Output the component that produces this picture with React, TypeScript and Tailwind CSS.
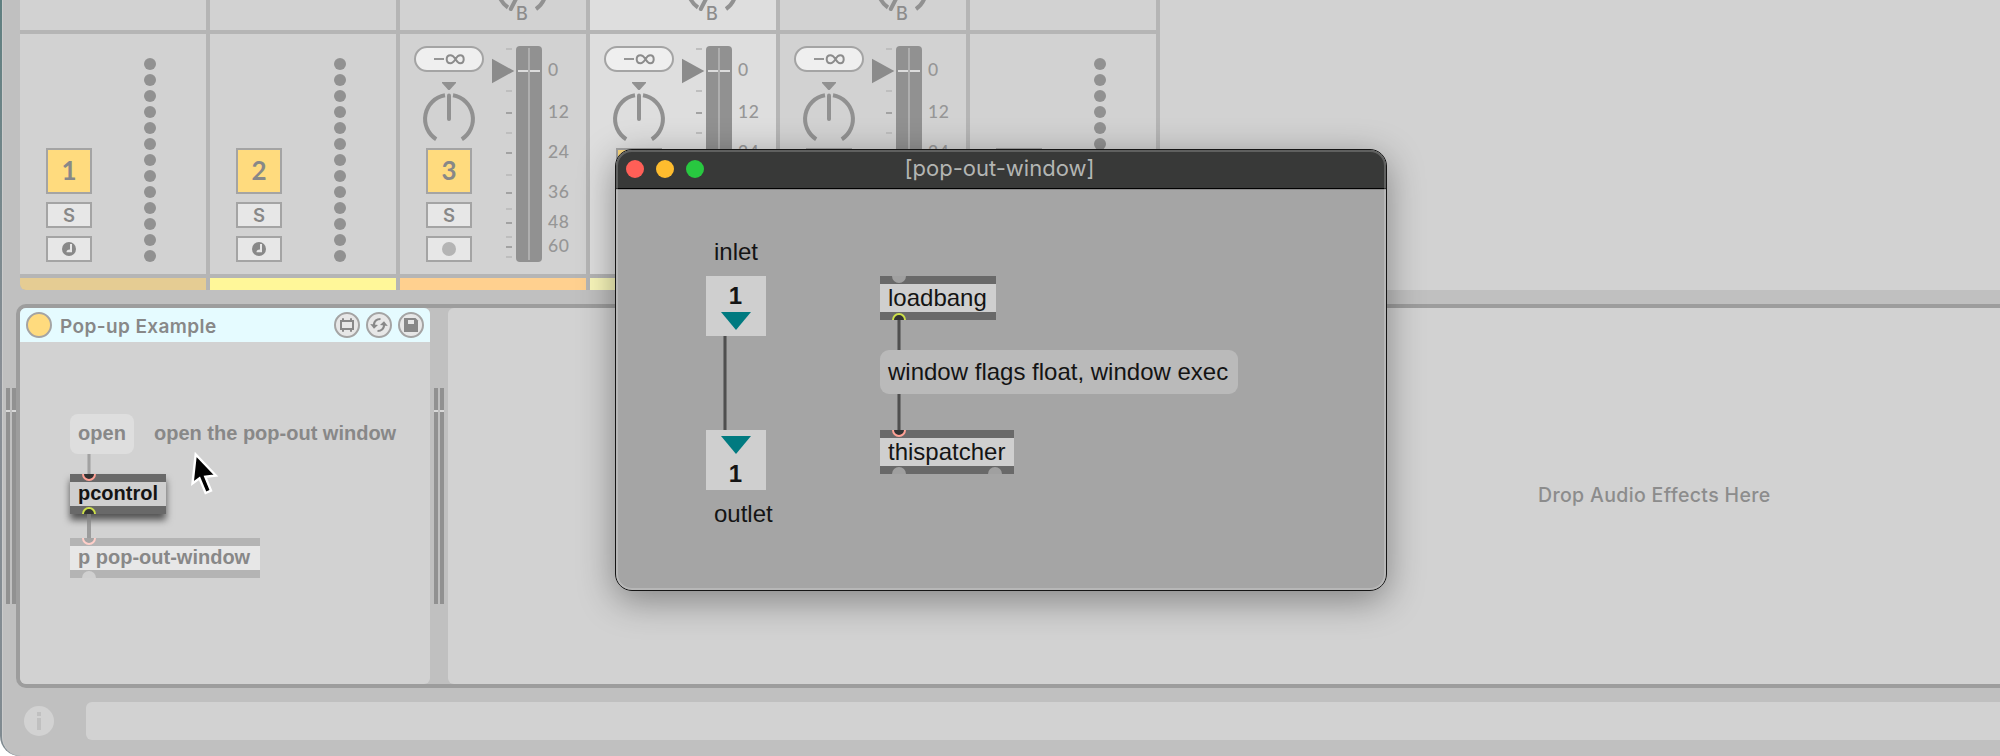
import React from "react";

const LABELS = [
  ["0", "mt-0"],
  ["12", "mt-[18px]"],
  ["24", "mt-4"],
  ["36", "mt-4"],
  ["48", "mt-1.5"],
  ["60", "mt-0"],
];

const TICKS = [15, 57, 79, 99, 119, 141, 159, 175, 189, 203, 213, 223];
const MAJOR = [79, 119, 159, 189, 213];

function PanKnob() {
  return (
    <svg width="70" height="76" viewBox="0 0 70 76" className="block shrink-0" fill="none">
      <path d="M28 10h14v1l-6.3 7h-1.4L28 11z" fill="#919191" />
      <path d="M31 23.3A24 24 0 0 0 22.2 67.2" stroke="#919191" strokeWidth="4" />
      <path d="M39 23.3A24 24 0 0 1 47.8 67.2" stroke="#919191" strokeWidth="4" />
      <path d="M35 23.500v23.500" stroke="#919191" strokeWidth="4" strokeLinecap="round" />
    </svg>
  );
}

function Fader() {
  return (
    <svg width="50" height="240" viewBox="0 0 50 240" className="ml-2 block shrink-0">
      {TICKS.map((y) => (
        <rect key={y} x="14" y={y - 1} width="6" height="2" fill={MAJOR.includes(y) ? "#a2a2a2" : "#bebebe"} />
      ))}
      <path d="M0 24.7L22.3 37L0 49.3z" fill="#8b8b8b" />
      <rect x="24" y="12" width="26" height="216" rx="4" fill="#919191" />
      <rect x="26" y="36" width="22" height="2" fill="#dcdcdc" />
      <rect x="36" y="14" width="2" height="212" fill="#afafaf" />
    </svg>
  );
}

function Dots() {
  return (
    <svg width="12" height="240" viewBox="0 0 12 240" className="ml-[40px] block">
      {Array.from({ length: 13 }, (_, i) => (
        <circle key={i} cx="6" cy={30 + i * 16} r="6" fill="#919191" />
      ))}
    </svg>
  );
}

function SendKnob() {
  return (
    <svg width="60" height="30" viewBox="0 0 60 30" className="ml-[92px] block" fill="none" stroke="#919191" strokeWidth="4">
      <path d="M7.5 -3A24 24 0 0 0 16 7.5M53 -3A24 24 0 0 1 44 9" />
      <path d="M25.5 -4L18.8 9" strokeLinecap="round" />
    </svg>
  );
}

type StripProps = { n: string; kind: "midi" | "audio" | "plain"; bg: string; color: string };

function Strip({ n, kind, bg, color }: StripProps) {
  const audio = kind === "audio";
  return (
    <div className="flex w-[186px] shrink-0 flex-col gap-1">
      <div className={`relative h-[30px] overflow-hidden ${bg}`}>
        {audio && <SendKnob />}
        {audio && (
          <span className="absolute left-[116px] top-[3px] font-[Inter] text-[18px] font-medium leading-[22px] text-[#8c8c8c]">B</span>
        )}
      </div>
      <div className={`flex h-[240px] ${bg}`}>
        <div className="ml-[14px] flex w-[70px] flex-col items-center pb-3">
          {audio ? (
            <>
              <div className="mt-3 flex h-[26px] w-[70px] shrink-0 items-center justify-center rounded-full border-2 border-[#a4a4a4] bg-[#efefef]">
                <svg width="32" height="14" viewBox="0 0 32 14" fill="none" stroke="#8c8c8c" strokeWidth="2">
                  <path d="M1 7h10" strokeWidth="1.8" />
                  <path d="M22.500 7C20.500 4 19.200 3.200 17.500 3.200C15.300 3.200 13.700 4.800 13.700 7.200C13.700 9.500 15.300 11.200 17.500 11.200C19.200 11.200 20.500 10.300 22.500 7C24.300 4 25.500 3.200 27.200 3.200C29.400 3.200 30.700 4.800 30.700 7.200C30.700 9.500 29.400 11.200 27.200 11.200C25.500 11.200 24.300 10.300 22.500 7z" />
                </svg>
              </div>
              <PanKnob />
            </>
          ) : (
            <div className="h-[114px] shrink-0" />
          )}
          <div className="flex h-[46px] w-[46px] shrink-0 items-center justify-center border-2 border-[#a4a4a4] bg-[#ffdb7e] pb-[2px] text-[26px] font-bold leading-none text-[#888]">
            {n}
          </div>
          <div className="mt-2 flex h-[26px] w-[46px] shrink-0 items-center justify-center border-2 border-[#a4a4a4] bg-[#e7e7e7] font-[Inter] text-[18.5px] font-semibold leading-none text-[#888]">
            S
          </div>
          <div className="mt-2 flex h-[26px] w-[46px] shrink-0 items-center justify-center border-2 border-[#a4a4a4] bg-[#e7e7e7]">
            <svg width="14" height="14" viewBox="0 0 14 14">
              <circle cx="7" cy="7" r="7" fill={audio ? "#b4b4b4" : "#888888"} />
              {!audio && <path d="M8 2h2v8.300H4.500C4.500 8.500 5.500 7.600 8 7.600z" fill="#e7e7e7" />}
            </svg>
          </div>
        </div>
        {audio ? (
          <>
            <Fader />
            <div className="ml-[6px] mt-[24px] text-[17.5px] font-medium tracking-[0.7px] text-[#969696]">
              {LABELS.map(([t, m]) => (
                <div key={t} className={`h-6 leading-6 ${m}`}>
                  {t}
                </div>
              ))}
            </div>
          </>
        ) : (
          <Dots />
        )}
      </div>
      <div className={`h-3 ${color}`} />
    </div>
  );
}

function Grip() {
  return (
    <svg width="10" height="216" viewBox="0 0 10 216" className="block">
      <path d="M0 0h4v216H0zM6 0h4v216H6z" fill="#919191" />
      <path d="M0 22h4v2H0zM6 22h4v2H6z" fill="#d8d8d8" />
    </svg>
  );
}

type Port = { x: number; tone: "idle" | "hot" | "cold" };

const PORT = {
  idle: ["fill-[#a0a0a0]", "stroke-none"],
  hot: ["fill-[#333]", "stroke-[#ffa296]"],
  cold: ["fill-[#333]", "stroke-[#cde04a]"],
};
const PORT_FADED = {
  idle: ["fill-[#d0d0d0]", "stroke-none"],
  hot: ["fill-[#a4a4a4]", "stroke-[#ffcfc9]"],
  cold: ["fill-[#a4a4a4]", "stroke-[#cde04a]"],
};

type ObjectProps = {
  place: string;
  text: string;
  w: number;
  h: number;
  ins: Port[];
  outs: Port[];
  faded?: boolean;
  bold?: boolean;
};

/* Patcher object: dark port bars above and below a text row. */
function PatchObject({ place, text, w, h, ins, outs, faded, bold }: ObjectProps) {
  const tones = faded ? PORT_FADED : PORT;
  const bar = faded ? "#b4b4b4" : "#696969";
  const port = (p: Port, d: string) => (
    <path key={p.x} transform={`translate(${p.x} 0)`} d={d} className={`${tones[p.tone][0]} ${tones[p.tone][1]}`} strokeWidth="2" />
  );
  return (
    <div className={`absolute flex flex-col ${place}`} style={{ width: w, height: h }}>
      <svg width={w} height="8" className="block shrink-0">
        <rect width={w} height="8" fill={bar} />
        {ins.map((p) => port(p, p.tone === "idle" ? "M-7 0A7 7 0 0 0 7 0z" : "M-6 -1V0A6 6 0 0 0 6 0V-1z"))}
      </svg>
      <div
        className={`flex flex-1 items-center whitespace-nowrap pl-2 ${faded ? "bg-[#e7e7e7] text-[#888]" : "bg-[#cfcfcf] text-[#141414]"} ${
          bold ? "pb-[2px] text-[20px] font-bold leading-none" : "text-[24px] leading-none"
        }`}
      >
        {text}
      </div>
      <svg width={w} height="8" className="block shrink-0">
        <rect width={w} height="8" fill={bar} />
        {outs.map((p) => port(p, p.tone === "idle" ? "M-7 8A7 7 0 0 1 7 8z" : "M-6 9V8A6 6 0 0 1 6 8V9z"))}
      </svg>
    </div>
  );
}

function Cord({ place, light }: { place: string; light?: boolean }) {
  return (
    <div
      className={`absolute w-1 border-x ${light ? "border-[#b8b8b8] bg-[#a2a2a2]" : "border-[#777] bg-[#4f4f4f]"} ${place}`}
    />
  );
}

function Triangle() {
  return (
    <svg width="30" height="18" viewBox="0 0 30 18" className="block">
      <path d="M0 0h30L15 18z" fill="#007a80" />
    </svg>
  );
}

function Device() {
  return (
    <div className="flex w-[410px] shrink-0 flex-col overflow-hidden rounded-md bg-[#d2d2d2]">
      <div className="flex h-[34px] shrink-0 items-center bg-[#e5fbff] pl-[6px] pr-[6px]">
        <div className="h-[26px] w-[26px] rounded-full border-2 border-[#a4a4a4] bg-[#ffdb7e]" />
        <span className="ml-[8px] flex-1 whitespace-nowrap pt-[2px] font-[Inter] text-[19px] font-semibold leading-none tracking-[0.4px] text-[#888]">
          Pop-up Example
        </span>
        <div className="flex gap-[6px]">
          <svg width="26" height="26" viewBox="0 0 26 26" fill="none">
            <circle cx="13" cy="13" r="12" fill="#e7e7e7" stroke="#a4a4a4" strokeWidth="2" />
            <path d="M7 9h12v8H7zM9 6.300v3M17 6.300v3M9 17v2.700M17 17v2.700" stroke="#888" strokeWidth="2" />
          </svg>
          <svg width="26" height="26" viewBox="0 0 26 26" fill="none">
            <circle cx="13" cy="13" r="12" fill="#e7e7e7" stroke="#a4a4a4" strokeWidth="2" />
            <path d="M14.500 7C10.500 7 8.200 9.500 7.800 13" stroke="#888" strokeWidth="2.200" />
            <path d="M4.200 12L12 13L8 16.800z" fill="#888" />
            <path d="M11.500 19C15.500 19 17.800 16.500 18.200 13" stroke="#888" strokeWidth="2.200" />
            <path d="M21.800 14L14 13L18 9.200z" fill="#888" />
          </svg>
          <svg width="26" height="26" viewBox="0 0 26 26" fill="none">
            <circle cx="13" cy="13" r="12" fill="#e7e7e7" stroke="#a4a4a4" strokeWidth="2" />
            <path d="M6 6h11.500L20 8.500V20H6z" fill="#888" />
            <path d="M10 8h6v4h-6z" fill="#e7e7e7" />
          </svg>
        </div>
      </div>
      <div className="relative flex-1 font-['Liberation_Sans',sans-serif]">
        <Cord light place="left-[67px] top-[112px] h-[20px]" />
        <div className="absolute left-[50px] top-[72px] flex h-10 w-16 items-center justify-center rounded-lg bg-[#dedede] pb-[2px] text-[20px] font-bold leading-none text-[#888]">
          open
        </div>
        <div className="absolute left-[134px] top-[72px] flex h-10 items-center whitespace-nowrap pb-[2px] text-[20px] font-bold leading-none text-[#888]">
          open the pop-out window
        </div>
        <PatchObject
          place="left-[50px] top-[132px] shadow-[0_6px_7px_rgba(0,0,0,0.6)]"
          text="pcontrol"
          w={96}
          h={40}
          bold
          ins={[{ x: 19, tone: "hot" }]}
          outs={[{ x: 19, tone: "cold" }]}
        />
        <div className="absolute left-[67px] top-[172px] h-[24px] w-1 bg-[#858585]/70" />
        <PatchObject
          place="left-[50px] top-[196px]"
          text="p pop-out-window"
          w={190}
          h={40}
          bold
          faded
          ins={[{ x: 19, tone: "hot" }]}
          outs={[{ x: 19, tone: "idle" }]}
        />
        <svg width="32" height="48" viewBox="0 0 32 48" className="absolute left-[169px] top-[107px]">
          <path
            d="M6.700 5.500L3.500 34.500L10.500 29.300L16.600 44L22 41.600L16.300 27.800L26.800 26.500z"
            fill="#000"
            stroke="#fff"
            strokeWidth="2.400"
          />
        </svg>
      </div>
    </div>
  );
}

function PopOutWindow() {
  return (
    <div className="absolute left-[615px] top-[149px] h-[442px] w-[772px] rounded-[17px] shadow-[0_9px_36px_rgba(0,0,0,0.38)]">
      <div className="flex h-full flex-col overflow-hidden rounded-[17px] border border-[#151515] bg-[#a5a5a5]">
        <div className="relative flex h-[39px] shrink-0 items-center justify-center border-b border-black bg-[#383938] pb-[2px] pr-[3px] font-[Inter] text-[22px] leading-none text-[#b3b5b3]">
          <svg width="78" height="18" className="absolute left-[10px] top-[10px]">
            <circle cx="9" cy="9" r="9" fill="#ff5f57" />
            <circle cx="39" cy="9" r="9" fill="#febc2e" />
            <circle cx="69" cy="9" r="9" fill="#28c840" />
          </svg>
          [pop-out-window]
        </div>
        <div className="relative flex-1 border-t border-[#8a8a8a] font-['Liberation_Sans',sans-serif] text-[24px] leading-none text-[#141414]">
          <div className="absolute left-[98px] top-[50px]">inlet</div>
          <Cord place="left-[107px] top-[146px] h-[94px]" />
          <div className="absolute left-[90px] top-[86px] flex h-[60px] w-[60px] flex-col items-center bg-[#cfcfcf] pt-[8px] font-bold">
            <span className="pr-px">1</span>
            <div className="mt-[4px]">
              <Triangle />
            </div>
          </div>
          <div className="absolute left-[90px] top-[240px] flex h-[60px] w-[60px] flex-col items-center bg-[#cfcfcf] pt-[6px] font-bold">
            <Triangle />
            <span className="mt-[8px] pr-px">1</span>
          </div>
          <div className="absolute left-[98px] top-[312px]">outlet</div>

          <PatchObject
            place="left-[264px] top-[86px]"
            text="loadbang"
            w={116}
            h={44}
            ins={[{ x: 19, tone: "idle" }]}
            outs={[{ x: 19, tone: "cold" }]}
          />
          <Cord place="left-[281px] top-[130px] h-[30px]" />
          <div className="absolute left-[264px] top-[160px] flex h-[44px] w-[358px] items-center whitespace-nowrap rounded-[9px] bg-[#bababa] pl-2">
            window flags float, window exec
          </div>
          <Cord place="left-[281px] top-[204px] h-[36px]" />
          <PatchObject
            place="left-[264px] top-[240px]"
            text="thispatcher"
            w={134}
            h={44}
            ins={[{ x: 19, tone: "hot" }]}
            outs={[
              { x: 19, tone: "idle" },
              { x: 115, tone: "idle" },
            ]}
          />
        </div>
      </div>
      <div className="pointer-events-none absolute inset-px rounded-2xl border-2 border-white/20" />
    </div>
  );
}

export default function App() {
  return (
    <div className="relative h-[756px] w-[2000px] overflow-hidden bg-white font-[Lato]">
      <div className="h-full rounded-bl-[20px] bg-linear-to-b from-[#5f7f80] via-[#8a8f96] to-[#7f8a90] pl-[2px]">
        <div className="flex h-full flex-col overflow-hidden rounded-bl-[19px] border-l border-[#cbcbcb] bg-[#c0c0c0]">
          <div className="flex h-[290px] shrink-0 pl-[17px]">
            <div className="flex gap-1 overflow-hidden rounded-bl-md bg-[#b5b5b5] pr-1">
              <Strip n="1" kind="midi" bg="bg-[#d2d2d2]" color="bg-[#e5cc93]" />
              <Strip n="2" kind="midi" bg="bg-[#d2d2d2]" color="bg-[#fff799]" />
              <Strip n="3" kind="audio" bg="bg-[#d2d2d2]" color="bg-[#ffd08f]" />
              <Strip n="4" kind="audio" bg="bg-[#dedede]" color="bg-[#f9f7bb]" />
              <Strip n="5" kind="audio" bg="bg-[#d2d2d2]" color="bg-[#d2d2d2]" />
              <Strip n="A" kind="plain" bg="bg-[#d2d2d2]" color="bg-[#d2d2d2]" />
            </div>
            <div className="flex-1 bg-[#d2d2d2]" />
          </div>
          <div className="mt-[14px] flex h-[384px] shrink-0">
            <div className="w-[13px] shrink-0 pl-[3px] pt-[84px]">
              <Grip />
            </div>
            <div className="flex flex-1 rounded-l-[10px] border-y-4 border-l-4 border-[#9d9d9d]">
              <Device />
              <div className="w-[18px] shrink-0 pl-1 pt-[80px]">
                <Grip />
              </div>
              <div className="flex flex-1 items-center rounded-l-md bg-[#d2d2d2] pl-[1090px]">
                <span className="whitespace-nowrap font-[Inter] text-[19.5px] font-medium leading-none tracking-[0.35px] text-[#8c8c8c]">
                  Drop Audio Effects Here
                </span>
              </div>
            </div>
          </div>
          <div className="mt-[14px] flex h-[38px] items-center pl-[21px]">
            <svg width="30" height="30" viewBox="0 0 30 30">
              <circle cx="15" cy="15" r="15" fill="#d2d2d2" />
              <path d="M13 6h4v4h-4zM13 12h4v12h-4z" fill="#c0c0c0" />
            </svg>
            <div className="ml-8 h-full flex-1 rounded-l-md bg-[#d2d2d2]" />
          </div>
        </div>
      </div>
      <PopOutWindow />
    </div>
  );
}
